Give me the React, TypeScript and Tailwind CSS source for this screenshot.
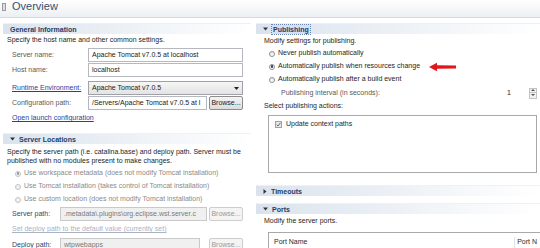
import React from "react";

const font = "font-['Segoe_UI','Liberation_Sans',Arial,sans-serif]";

function Twistie({ open }: { open: boolean }) {
  return open ? (
    <svg width="5" height="4" viewBox="0 0 5 4" className="mr-[4px] shrink-0">
      <path d="M0 0.5 H5 L2.5 3.5 Z" fill="#333" />
    </svg>
  ) : (
    <svg width="4" height="5" viewBox="0 0 4 5" className="mr-[4px] shrink-0">
      <path d="M0.5 0 V5 L3.5 2.5 Z" fill="#333" />
    </svg>
  );
}

function SectionBar({
  title,
  twistie,
  focused,
  className = "",
}: {
  title: string;
  twistie?: "open" | "closed";
  focused?: boolean;
  className?: string;
}) {
  return (
    <div
      className={`flex items-center h-[11px] pl-[7px] border-t border-[#eef2f6] bg-gradient-to-r from-[#dae3ed] via-[#edf1f6] to-white ${className}`}
    >
      {twistie && <Twistie open={twistie === "open"} />}
      <span
        className={`text-[7px] font-bold text-[#22406a] leading-[9px] ${
          focused ? "outline outline-1 outline-dotted outline-[#6c86b3] bg-[#d5e1f2] px-[1px]" : ""
        }`}
      >
        {title}
      </span>
    </div>
  );
}

function Radio({ checked, disabled, label }: { checked?: boolean; disabled?: boolean; label: string }) {
  return (
    <div className="flex items-center h-[13px] gap-[3px] whitespace-nowrap">
      <span
        className={`size-[6px] rounded-full border flex items-center justify-center ${
          disabled ? "border-[#c4c4c4] bg-[#f1f1f1]" : "border-[#8e8f8f] bg-gradient-to-b from-[#e6e6e6] to-white"
        }`}
      >
        {checked && <span className={`size-[2.5px] rounded-full ${disabled ? "bg-[#9a9a9a]" : "bg-[#2a3f64]"}`} />}
      </span>
      <span className={`text-[7px] ${disabled ? "text-[#8a8a8a]" : "text-[#1e1e1e]"}`}>{label}</span>
    </div>
  );
}

function Input({ value, disabled, className = "" }: { value: string; disabled?: boolean; className?: string }) {
  return (
    <div
      className={`h-[14px] flex items-center px-[3px] border text-[7px] overflow-hidden whitespace-nowrap ${
        disabled ? "border-[#c9c9c9] bg-[#f0f0f0] text-[#7a7a7a]" : "border-[#b5b8be] bg-white text-[#1a1a1a]"
      } ${className}`}
    >
      {value}
    </div>
  );
}

function Browse({ disabled }: { disabled?: boolean }) {
  return (
    <div
      className={`h-[14px] w-[34px] ml-[2px] flex items-center justify-center rounded-[2px] border text-[7px] ${
        disabled
          ? "border-[#cdcdcd] bg-[#f4f4f4] text-[#9a9a9a]"
          : "border-[#8d8d8d] bg-gradient-to-b from-[#f4f4f4] to-[#dcdcdc] text-[#1a1a1a]"
      }`}
    >
      Browse...
    </div>
  );
}

function Row({ label, link, children, className = "" }: { label: string; link?: boolean; children: React.ReactNode; className?: string }) {
  return (
    <div className={`flex items-center h-[14px] ${className}`}>
      <span
        className={`w-[85px] pl-[9px] text-[7px] shrink-0 whitespace-nowrap ${
          link ? "text-[#1f44a0] underline" : "text-[#5a5a5a]"
        }`}
      >
        {label}
      </span>
      {children}
    </div>
  );
}

export default function App() {
  return (
    <div className={`w-[540px] h-[248px] overflow-hidden bg-white ${font}`}>
      <div className="h-[18px] flex items-center pl-[2px] bg-gradient-to-b from-white to-[#eceff3] border-b border-[#d6dbe1]">
        <span className="w-[4px] h-[8px] border border-[#9a9a9a] bg-[#e0e0e0] mr-[6px] mb-[3px]" />
        <span className="text-[11px] text-[#34506f] leading-none mb-[4px]">Overview</span>
      </div>

      <div className="flex">
        {/* left column */}
        <div className="w-[251px] pl-[3px] flex flex-col">
          <SectionBar title="General Information" className="mt-[5px] pl-[4px]" />
          <div className="mt-[1px] h-[10px] pl-[4px] text-[7px] text-[#1e1e1e] leading-[10px] whitespace-nowrap">
            Specify the host name and other common settings.
          </div>
          <Row label="Server name:" className="mt-[3px]">
            <Input value="Apache Tomcat v7.0.5 at localhost" className="w-[155px]" />
          </Row>
          <Row label="Host name:" className="mt-[1px]">
            <Input value="localhost" className="w-[155px]" />
          </Row>
          <Row label="Runtime Environment:" link className="mt-[4px]">
            <div className="h-[14px] w-[155px] flex items-center justify-between px-[3px] border border-[#9fa3a9] bg-gradient-to-b from-[#f6f6f6] to-[#e3e3e3] text-[7px] text-[#1a1a1a]">
              Apache Tomcat v7.0.5
              <svg width="5" height="3" viewBox="0 0 5 3">
                <path d="M0 0 H5 L2.5 3 Z" fill="#222" />
              </svg>
            </div>
          </Row>
          <Row label="Configuration path:" className="mt-[1px]">
            <Input value="/Servers/Apache Tomcat v7.0.5 at l" className="w-[119px]" />
            <Browse />
          </Row>
          <div className="mt-[3px] h-[10px] pl-[9px] text-[7px] text-[#1f44a0] underline leading-[10px]">
            Open launch configuration
          </div>

          <SectionBar title="Server Locations" twistie="open" className="mt-[10px] pl-[4px]" />
          <div className="mt-[3px] pl-[4px] text-[7px] text-[#1e1e1e] leading-[9px] whitespace-nowrap">
            Specify the server path (i.e. catalina.base) and deploy path. Server must be
            <br />
            published with no modules present to make changes.
          </div>
          <div className="mt-[2px] pl-[12px]">
            <Radio checked disabled label="Use workspace metadata (does not modify Tomcat installation)" />
            <Radio disabled label="Use Tomcat installation (takes control of Tomcat installation)" />
            <Radio disabled label="Use custom location (does not modify Tomcat installation)" />
          </div>
          <div className="flex items-center h-[14px] mt-[1px]">
            <span className="w-[57px] pl-[9px] text-[7px] text-[#2c4a6e] shrink-0">Server path:</span>
            <Input disabled value=".metadata\.plugins\org.eclipse.wst.server.c" className="w-[147px]" />
            <Browse disabled />
          </div>
          <div className="mt-[3px] h-[10px] pl-[9px] text-[7px] text-[#a9b3c4] underline leading-[10px]">
            Set deploy path to the default value (currently set)
          </div>
          <div className="flex items-center h-[14px] mt-[4px]">
            <span className="w-[57px] pl-[9px] text-[7px] text-[#2c4a6e] shrink-0">Deploy path:</span>
            <Input disabled value="wtpwebapps" className="w-[140px]" />
            <span className="w-[7px]" />
            <Browse disabled />
          </div>
        </div>

        {/* right column */}
        <div className="flex-1 pl-[5px] flex flex-col">
          <SectionBar title="Publishing" twistie="open" focused className="mt-[5px]" />
          <div className="mt-[2px] h-[10px] pl-[8px] text-[7px] text-[#1e1e1e] leading-[10px]">
            Modify settings for publishing.
          </div>
          <div className="mt-[1px] pl-[13px]">
            <Radio label="Never publish automatically" />
            <div className="flex items-center">
              <Radio checked label="Automatically publish when resources change" />
              <svg width="30" height="10" viewBox="0 0 30 10" className="ml-[8px]">
                <path d="M1 5 L9 0.8 L9 3.3 L28 3.6 L28 6.4 L9 6.7 L9 9.2 Z" fill="#e3161b" />
              </svg>
            </div>
            <Radio label="Automatically publish after a build event" />
          </div>
          <div className="mt-[1px] h-[12px] flex items-center pl-[25px] pr-[3px]">
            <span className="text-[7px] text-[#5a5a5a]">Publishing interval (in seconds):</span>
            <div className="ml-auto flex items-center">
              <span className="w-[22px] text-[7px] text-[#1a1a1a]">1</span>
              <div className="w-[8px] h-[11px] flex flex-col border border-[#c4c4c4] bg-[#f2f2f2]">
                <div className="h-1/2 flex items-center justify-center border-b border-[#c4c4c4]">
                  <svg width="4" height="2" viewBox="0 0 4 2"><path d="M0 2 H4 L2 0 Z" fill="#555" /></svg>
                </div>
                <div className="h-1/2 flex items-center justify-center">
                  <svg width="4" height="2" viewBox="0 0 4 2"><path d="M0 0 H4 L2 2 Z" fill="#555" /></svg>
                </div>
              </div>
            </div>
          </div>
          <div className="mt-[2px] h-[10px] pl-[8px] text-[7px] text-[#1e1e1e] leading-[10px]">
            Select publishing actions:
          </div>
          <div className="mt-[4px] ml-[12px] mr-[3px] h-[58px] border border-[#a9a9a9] bg-white pt-[3px] pl-[6px]">
            <div className="flex items-center gap-[4px]">
              <span className="size-[7px] border border-[#a0a0a0] bg-[#e8e8e8] flex items-center justify-center">
                <svg width="5" height="5" viewBox="0 0 5 5">
                  <path d="M0.6 2.6 L2 4 L4.5 0.8" stroke="#6b6b6b" strokeWidth="1" fill="none" />
                </svg>
              </span>
              <span className="text-[7px] text-[#1e1e1e]">Update context paths</span>
            </div>
          </div>

          <SectionBar title="Timeouts" twistie="closed" className="mt-[12px]" />
          <SectionBar title="Ports" twistie="open" className="mt-[7px]" />
          <div className="mt-[2px] h-[10px] pl-[8px] text-[7px] text-[#1e1e1e] leading-[10px]">
            Modify the server ports.
          </div>
          <div className="mt-[6px] ml-[12px] h-[20px] border-t border-l border-[#a9a9a9] flex items-start pt-[4px] pl-[5px] pr-[3px] text-[7px] text-[#2a2a2a] overflow-hidden whitespace-nowrap">
            <span>Port Name</span>
            <span className="ml-auto border-l border-[#e2e2e2] pl-[2px]">Port N</span>
          </div>
        </div>
      </div>
    </div>
  );
}
